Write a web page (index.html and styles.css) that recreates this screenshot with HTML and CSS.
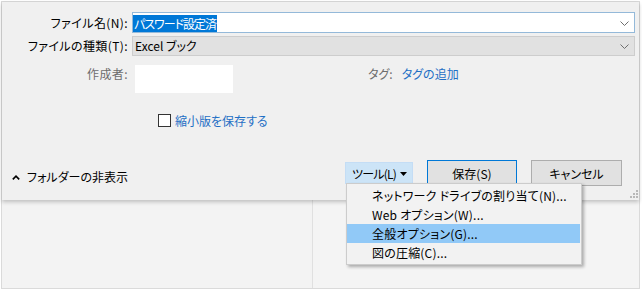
FILE: index.html
```html
<!DOCTYPE html>
<html>
<head>
    <meta charset="utf-8">
    <title>名前を付けて保存</title>
    <link rel="stylesheet" href="styles.css">
</head>
<body>
    <div class="window">
        <div class="dialog">
            <div class="form">
                <label class="label" for="fileName">ファイル名(N):</label>
                <div class="combo combo-edit" id="fileName">
                    <span class="combo-text"><span class="selected">パスワード設定済</span></span>
                    <svg class="chevron" width="9" height="5" viewBox="0 0 9 5"><polyline points="0.5,0.5 4.5,4.5 8.5,0.5" fill="none" stroke="#6e6e6e" stroke-width="1"/></svg>
                </div>
                <label class="label" for="fileType">ファイルの種類(T):</label>
                <div class="combo combo-list" id="fileType">
                    <span class="combo-text">Excel ブック</span>
                    <svg class="chevron" width="9" height="5" viewBox="0 0 9 5"><polyline points="0.5,0.5 4.5,4.5 8.5,0.5" fill="none" stroke="#6e6e6e" stroke-width="1"/></svg>
                </div>
                <span class="label label-muted label-top">作成者:</span>
                <div class="meta-row">
                    <div class="author-box"></div>
                    <span class="tag-label">タグ:</span>
                    <span class="link">タグの追加</span>
                </div>
            </div>

            <div class="thumb-row">
                <span class="checkbox"></span>
                <span class="link">縮小版を保存する</span>
            </div>

            <div class="footer">
                <div class="folder-toggle">
                    <svg class="caret" width="8" height="5" viewBox="0 0 8 5"><polyline points="0.8,4.4 4,1.2 7.2,4.4" fill="none" stroke="#000" stroke-width="1.6"/></svg>
                    フォルダーの非表示
                </div>
                <div class="actions">
                    <div class="tools">
                        <button class="btn-tools"><span class="tools-text">ツール(L)</span><svg class="tri" width="7" height="4" viewBox="0 0 7 4"><polygon points="0,0 7,0 3.5,4" fill="#000"/></svg></button>
                        <ul class="menu">
                            <li>ネットワーク ドライブの割り当て(N)...</li>
                            <li>Web オプション(W)...</li>
                            <li class="active">全般オプション(G)...</li>
                            <li>図の圧縮(C)...</li>
                        </ul>
                    </div>
                    <button class="btn btn-default">保存(S)</button>
                    <button class="btn">キャンセル</button>
                </div>
            </div>

            <svg class="grip" width="10" height="10" viewBox="0 0 10 10">
                <rect x="8" y="2" width="2" height="2" fill="#b8b8b8"/>
                <rect x="5" y="5" width="2" height="2" fill="#b8b8b8"/>
                <rect x="8" y="5" width="2" height="2" fill="#b8b8b8"/>
                <rect x="2" y="8" width="2" height="2" fill="#b8b8b8"/>
                <rect x="5" y="8" width="2" height="2" fill="#b8b8b8"/>
                <rect x="8" y="8" width="2" height="2" fill="#b8b8b8"/>
            </svg>
        </div>
        <div class="panes">
            <div class="pane pane-left"></div>
            <div class="pane pane-right"></div>
        </div>
    </div>
</body>
</html>
```

FILE: styles.css
```css
body {
    margin: 0;
    background: #ffffff;
    font-family: 'Noto Sans CJK JP', 'Noto Sans', sans-serif;
    font-size: 12px;
    font-feature-settings: "palt";
    color: #000000;
}

.window {
    box-sizing: border-box;
    margin: 1px 0 0 1px;
    width: 639px;
    height: 288px;
    border: 1px solid #dadada;
    display: flex;
    flex-direction: column;
}

.dialog {
    position: relative;
    z-index: 1;
    box-sizing: border-box;
    height: 198px;
    padding-top: 10px;
    background: #f0f0f0;
    box-shadow: 0 2px 4px rgba(0, 0, 0, 0.22);
}

.form {
    display: grid;
    grid-template-columns: 126px 1fr;
    column-gap: 4px;
    row-gap: 3px;
    padding-right: 4px;
    align-items: center;
}

.label {
    text-align: right;
    line-height: 16px;
    white-space: nowrap;
    letter-spacing: 0.4px;
}

.label-muted {
    color: #6d6d6d;
}

.label-top {
    align-self: start;
    margin-top: 6px;
    line-height: 18px;
}

.combo {
    box-sizing: border-box;
    display: flex;
    align-items: center;
    justify-content: space-between;
}

.combo-edit {
    height: 21px;
    border: 1px solid #94b9d9;
    background: #ffffff;
    padding-top: 1px;
}

.combo-list {
    height: 20px;
    border: 1px solid #cdcdcd;
    background: #e1e1e1;
}

.combo-text {
    line-height: 16px;
    padding-left: 2px;
}

.combo-edit .combo-text {
    padding-left: 0;
}

.selected {
    display: inline-block;
    background: #0078d7;
    color: #ffffff;
    line-height: 17px;
    padding: 0 1px;
    letter-spacing: -1px;
}

.chevron {
    margin-right: 5px;
}

.meta-row {
    display: flex;
    align-items: flex-start;
    margin-top: 6px;
}

.author-box {
    width: 98px;
    height: 28px;
    margin-left: 3px;
    background: #ffffff;
}

.tag-label {
    margin-left: 135px;
    color: #6d6d6d;
    line-height: 18px;
}

.meta-row .link {
    margin-left: 9px;
    line-height: 18px;
}

.link {
    color: #1f6fc5;
}

.thumb-row {
    display: flex;
    align-items: center;
    gap: 4px;
    margin-top: 20px;
    padding-left: 156px;
    height: 14px;
}

.checkbox {
    box-sizing: border-box;
    width: 13px;
    height: 13px;
    border: 1px solid #333333;
    background: #ffffff;
}

.footer {
    display: flex;
    justify-content: space-between;
    align-items: flex-start;
    margin-top: 33px;
    padding: 0 17px 0 10px;
}

.folder-toggle {
    display: flex;
    align-items: center;
    gap: 7px;
    margin-top: 9px;
    line-height: 16px;
}

.actions {
    display: flex;
    align-items: center;
    gap: 14px;
}

.tools {
    position: relative;
}

button {
    font-family: inherit;
    font-size: 12px;
    font-feature-settings: "palt";
    color: #000000;
    margin: 0;
    white-space: nowrap;
}

.btn-tools {
    box-sizing: border-box;
    display: flex;
    align-items: center;
    justify-content: space-between;
    width: 68px;
    height: 22px;
    padding: 0 5px 0 6px;
    border: 1px solid #c4ddf5;
    background: #cce4f7;
}

.tools-text {
    letter-spacing: -0.8px;
}

.tri {
    margin-top: 1px;
}

.btn {
    box-sizing: border-box;
    width: 91px;
    height: 26px;
    padding: 0;
    border: 1px solid #adadad;
    background: #e1e1e1;
}

.btn-default {
    width: 90px;
    border-color: #0078d7;
}

.menu {
    position: absolute;
    top: 21px;
    left: 1px;
    box-sizing: border-box;
    width: 236px;
    margin: 0;
    padding: 2px 0 2px;
    list-style: none;
    background: #f2f2f2;
    border: 1px solid #cccccc;
    box-shadow: 2px 2px 3px rgba(0, 0, 0, 0.3);
}

.menu li {
    height: 19px;
    line-height: 19px;
    padding-left: 25px;
    margin-right: 1px;
    white-space: nowrap;
    letter-spacing: 0.2px;
}

.menu li.active {
    background: #91c9f7;
}

.grip {
    position: absolute;
    right: 1px;
    bottom: 2px;
}

.panes {
    display: flex;
    flex: 1;
}

.pane {
    background: #f3f3f3;
}

.pane-left {
    width: 310px;
    border-right: 1px solid #e0e0e0;
}

.pane-right {
    flex: 1;
    background: #f4f4f4;
}
```
